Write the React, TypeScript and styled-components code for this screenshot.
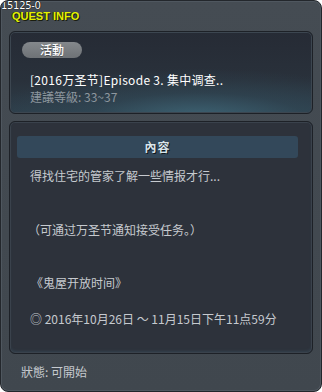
import React from "react";
import styled, { createGlobalStyle } from "styled-components";

const Global = createGlobalStyle`
  html, body { margin: 0; padding: 0; background: #ffffff; }
  body { font-family: "Noto Sans CJK SC", "Noto Sans", sans-serif; }
`;

const Window = styled.div`
  position: relative;
  box-sizing: border-box;
  width: 322px;
  height: 392px;
  border-radius: 8px;
  background: linear-gradient(180deg, #454c53 0%, #40474e 100%);
  border: 1px solid #23272c;
  box-shadow: inset 0 0 0 1px #4f575f;
  display: flex;
  flex-direction: column;
  padding: 0 8px;
  overflow: hidden;
`;

const Header = styled.div`
  height: 30px;
  display: flex;
  flex-direction: column;
`;

const WindowId = styled.div`
  font-family: "DejaVu Sans", sans-serif;
  font-size: 10px;
  line-height: 10px;
  color: #ffffff;
  letter-spacing: -0.3px;
  text-shadow: 0 0 1px #000, 0 0 1px #000;
  margin-left: -8px;
`;

const WindowTitle = styled.div`
  margin-left: 3px;
  font-family: "Liberation Sans", "DejaVu Sans", sans-serif;
  font-weight: bold;
  font-size: 11px;
  line-height: 11px;
  color: #e4f200;
  letter-spacing: 0px;
  text-shadow: 1px 1px 0 #1a1d10, -1px 0 0 #2a2f18;
`;

const Panel = styled.div`
  box-sizing: border-box;
  border-radius: 6px;
  border: 1px solid #1d2127;
  box-shadow: inset 0 0 0 1px #3c4650;
`;

const InfoPanel = styled(Panel)`
  height: 83px;
  padding: 10px 12px 0 12px;
  background:
    radial-gradient(ellipse 70% 60% at 62% 105%, rgba(66, 110, 128, 0.75) 0%, rgba(52, 84, 100, 0.35) 50%, rgba(40, 50, 62, 0) 100%),
    linear-gradient(180deg, #262b35 0%, #29313b 60%, #2e3e4a 100%);
  display: flex;
  flex-direction: column;
`;

const Badge = styled.div`
  width: 60px;
  height: 16px;
  border-radius: 8px;
  background: linear-gradient(180deg, #84888c 0%, #6e7276 100%);
  color: #ffffff;
  font-size: 12px;
  line-height: 16px;
  text-align: center;
  font-weight: 500;
  text-shadow: 0 1px 0 #4a4d50;
`;

const QuestName = styled.div`
  margin-top: 13px;
  padding-left: 8px;
  font-size: 12px;
  line-height: 17px;
  color: #ffffff;
  white-space: nowrap;
  letter-spacing: 0.3px;
`;

const Level = styled.div`
  padding-left: 8px;
  font-size: 12px;
  line-height: 17px;
  color: #8e979f;
  white-space: nowrap;
`;

const ContentPanel = styled(Panel)`
  margin-top: 7px;
  height: 233px;
  background: #2d323b;
  padding: 14px 14px 0 7px;
  box-shadow: inset 0 0 0 1px #3a424c, inset 0 -2px 3px rgba(70, 110, 130, 0.25);
  display: flex;
  flex-direction: column;
`;

const SectionBar = styled.div`
  height: 22px;
  border-radius: 3px;
  background: #33485a;
  color: #d8e4ea;
  font-size: 12px;
  font-weight: bold;
  line-height: 22px;
  text-align: center;
  letter-spacing: 1px;
  text-shadow: 1px 1px 0 #10161c;
`;

const Line = styled.div<{ $top: number; $indent?: number }>`
  margin-top: ${(p) => p.$top}px;
  padding-left: ${(p) => 13 + (p.$indent ?? 0)}px;
  font-size: 12px;
  line-height: 18px;
  color: #c6cacf;
  white-space: nowrap;
`;

const Status = styled.div`
  flex: 1;
  display: flex;
  align-items: center;
  padding-left: 12px;
  padding-bottom: 3px;
  font-size: 12px;
  color: #c6cacf;
`;

export default function App() {
  return (
    <>
      <Global />
      <Window>
        <Header>
          <WindowId>15125-0</WindowId>
          <WindowTitle>QUEST INFO</WindowTitle>
        </Header>
        <InfoPanel>
          <Badge>活動</Badge>
          <QuestName>[2016万圣节]Episode 3. 集中调查..</QuestName>
          <Level>建議等級: 33~37</Level>
        </InfoPanel>
        <ContentPanel>
          <SectionBar>內容</SectionBar>
          <Line $top={9}>得找住宅的管家了解一些情报才行...</Line>
          <Line $top={36} $indent={-2}>（可通过万圣节通知接受任务。）</Line>
          <Line $top={35} $indent={1}>《鬼屋开放时间》</Line>
          <Line $top={18} $indent={0}>◎ 2016年10月26日 ～ 11月15日下午11点59分</Line>
        </ContentPanel>
        <Status>狀態: 可開始</Status>
      </Window>
    </>
  );
}
